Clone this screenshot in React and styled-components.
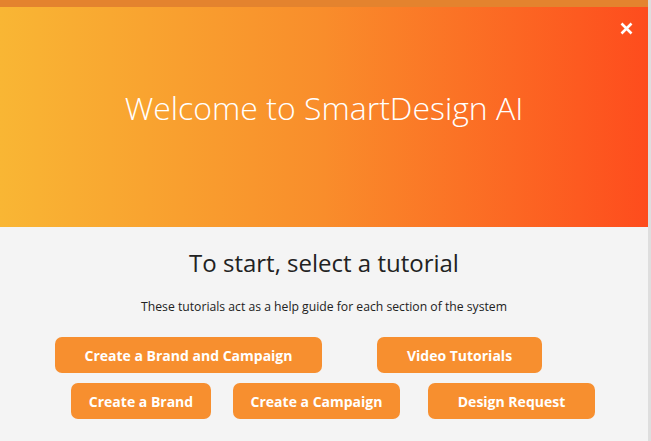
import React from "react";
import styled, { createGlobalStyle } from "styled-components";

const Global = createGlobalStyle`
  html, body { margin: 0; padding: 0; }
  body {
    background: #dedede;
    font-family: "Open Sans", "Liberation Sans", sans-serif;
    width: 651px;
    height: 441px;
    overflow: hidden;
  }
`;

const Modal = styled.div`
  width: 648px;
  height: 441px;
  background: #f4f4f4;
  display: flex;
  flex-direction: column;
`;

const TopStrip = styled.div`
  height: 7px;
  background: #e4832e;
`;

const Header = styled.header`
  position: relative;
  height: 220px;
  background: linear-gradient(to right, #f9b634, #f98d2b 50%, #fe4c1d);
  display: flex;
  align-items: center;
  justify-content: center;
`;

const Title = styled.h1`
  margin: 0 0 20px 0;
  font-weight: 300;
  font-size: 32px;
  color: #ffffff;
  letter-spacing: 0;
`;

const Close = styled.button`
  position: absolute;
  top: 13px;
  right: 14px;
  width: 16px;
  height: 16px;
  padding: 0;
  border: 0;
  background: transparent;
  display: flex;
  align-items: center;
  justify-content: center;
  cursor: pointer;
`;

const Body = styled.section`
  display: flex;
  flex-direction: column;
  align-items: center;
  padding-top: 20px;
`;

const Subtitle = styled.h2`
  margin: 0;
  font-weight: 400;
  font-size: 24px;
  line-height: 32px;
  color: #222222;
`;

const Lead = styled.p`
  margin: 19px 0 0 0;
  font-size: 12.2px;
  line-height: 18px;
  color: #222222;
`;

const Buttons = styled.div`
  align-self: stretch;
  display: flex;
  flex-direction: column;
  gap: 10px;
  margin-top: 21px;
`;

const Row = styled.div`
  display: flex;
  padding-left: ${(p) => p.$indent}px;
`;

const Btn = styled.button`
  width: ${(p) => p.$w}px;
  margin-left: ${(p) => p.$ml || 0}px;
  height: 36px;
  border: 0;
  border-radius: 7px;
  background: #f78f2f;
  color: #ffffff;
  font-family: "Open Sans", "Liberation Sans", sans-serif;
  font-weight: 700;
  font-size: 14px;
  display: flex;
  align-items: center;
  justify-content: center;
  cursor: pointer;
  padding: 0;
`;

export default function App() {
  return (
    <>
      <Global />
      <Modal>
        <TopStrip />
        <Header>
          <Title>Welcome to SmartDesign AI</Title>
          <Close aria-label="Close">
            <svg width="13" height="13" viewBox="0 0 13 13">
              <path d="M1.5 1.5 L11.5 11.5 M11.5 1.5 L1.5 11.5" stroke="#fff" strokeWidth="2.6" strokeLinecap="butt" />
            </svg>
          </Close>
        </Header>
        <Body>
          <Subtitle>To start, select a tutorial</Subtitle>
          <Lead>These tutorials act as a help guide for each section of the system</Lead>
          <Buttons>
            <Row $indent={55}>
              <Btn $w={267}>Create a Brand and Campaign</Btn>
              <Btn $w={165} $ml={55}>Video Tutorials</Btn>
            </Row>
            <Row $indent={71}>
              <Btn $w={140}>Create a Brand</Btn>
              <Btn $w={167} $ml={22}>Create a Campaign</Btn>
              <Btn $w={167} $ml={28}>Design Request</Btn>
            </Row>
          </Buttons>
        </Body>
      </Modal>
    </>
  );
}
